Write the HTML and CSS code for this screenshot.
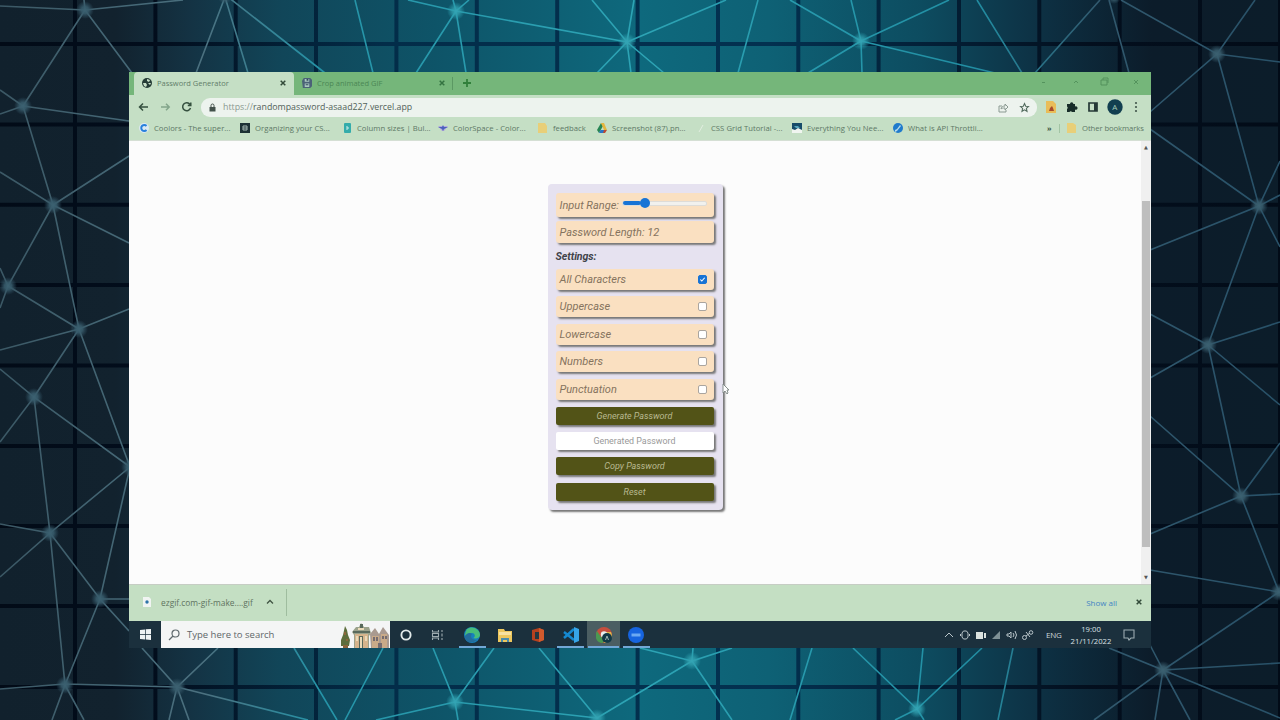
FILE: index.html
```
<!DOCTYPE html>
<html lang="en">
<head>
<meta charset="utf-8">
<title>Password Generator</title>
<link rel="stylesheet" href="styles.css">
</head>
<body>
<svg class="backdrop" viewBox="0 0 1280 720" aria-hidden="true">
  <defs>
    <linearGradient id="sea"><stop offset="0" stop-color="#11212d"/><stop offset=".09" stop-color="#12222e"/><stop offset=".15" stop-color="#143344"/><stop offset=".22" stop-color="#114659"/><stop offset=".34" stop-color="#0e5468"/><stop offset=".5" stop-color="#0e697d"/><stop offset=".6" stop-color="#0e6175"/><stop offset=".72" stop-color="#0d4c60"/><stop offset=".81" stop-color="#0d3144"/><stop offset=".9" stop-color="#0c1c2a"/><stop offset="1" stop-color="#0c1d2a"/></linearGradient>
    <linearGradient id="ray" gradientUnits="userSpaceOnUse" x1="0" y1="0" x2="1280" y2="0"><stop offset="0" stop-color="#3b5865"/><stop offset=".16" stop-color="#4b7180"/><stop offset=".25" stop-color="#2593a7"/><stop offset=".5" stop-color="#2da4b5"/><stop offset=".76" stop-color="#218ea3"/><stop offset=".86" stop-color="#31586d"/><stop offset="1" stop-color="#285168"/></linearGradient>
    <linearGradient id="bar" gradientUnits="userSpaceOnUse" x1="0" y1="0" x2="1280" y2="0"><stop offset="0" stop-color="#020b17"/><stop offset=".12" stop-color="#020d1c"/><stop offset=".3" stop-color="#032d49"/><stop offset=".6" stop-color="#033150"/><stop offset=".85" stop-color="#030f1e"/><stop offset="1" stop-color="#020b17"/></linearGradient>
    <radialGradient id="glow"><stop offset="0" stop-color="#35a5b5" stop-opacity=".95"/><stop offset=".4" stop-color="#309fae" stop-opacity=".8"/><stop offset="1" stop-color="#299eae" stop-opacity="0"/></radialGradient>
    <radialGradient id="dim"><stop offset="0" stop-color="#3c6171"/><stop offset=".4" stop-color="#375b6b" stop-opacity=".9"/><stop offset="1" stop-color="#315263" stop-opacity="0"/></radialGradient>
  </defs>
  <path fill="url(#sea)" d="M0 0h1280v720H0z"/>
  <g fill="url(#bar)"><path d="M0 42h1280v4H0zM0 122.400h1280v4H0zM0 202.800h1280v4H0zM0 283h1280v4H0zM0 363.500h1280v4H0zM0 444h1280v4H0zM0 524h1280v4H0zM0 604h1280v4H0zM0 685h1280v4H0z"/></g>
  <path stroke="url(#bar)" stroke-width="4" d="M75 0V720.1M155.400 0V720.1M235.700 0V720.1M316 0V720.1M396.400 0V720.1M476.800 0V720.1M557.200 0V720.1M637.600 0V720.1M718 0V720.1M798.300 0V720.1M878.600 0V720.1M959 0V720.1M1039.300 0V720.1M1119.700 0V720.1M1200 0V720.1M1280 0V720.1"/>
  <path fill="none" stroke="url(#ray)" stroke-width="1.600" d="M0 6 85 10 183 0M84 0 85 10 23 106M85 10 132 73M225-3 196 73M225-3 248 73M228-3 325 73M355 0 373 73M408 0 456 11M453 0 456 11 469 0M456 11 416 73M456 11 466 73M456 11 627 42M592 0 627 42 634 0M627 42 726 0M597 73 627 42 631 73M627 42 664 73M758 0 738 73M790 0 861 41 851 0M861 41 949 0M808 73 861 41 862 73M861 41 995 73M977 0 1022 73M1100 0 1035 73M1109 0 1129 73M1121 0 1217 54 1255 0M1150 17 1217 54 1280 62M1197 73 1217 54 1222 73M1150 82 1217 54M1150 112 1150 82M1150 82 1217 40" visibility="hidden"/>
  <path fill="none" stroke="url(#ray)" stroke-width="1.600" d="M0 6 85 10 183 0M84 0 85 10 23 106M85 10 132 73M225-3 196 73M225-3 248 73M228-3 325 73M355 0 373 73M408 0 456 11M453 0 456 11 469 0M456 11 416 73M456 11 466 73M456 11 627 42M592 0 627 42 634 0M627 42 726 0M597 73 627 42 631 73M627 42 664 73M758 0 738 73M790 0 861 41 851 0M861 41 949 0M808 73 861 41 862 73M861 41 995 73M977 0 1022 73M1100 0 1035 73M1109 0 1129 73M1121 0 1217 54 1255 0M1217 54 1280 62M1150 112 1217 54 1259 206 1150 129M1280 161 1259 206 1280 195M1259 206 1280 247M1150 250 1259 206 1208 345 1150 314M1150 378 1208 345 1280 322M1208 345 1280 405M1208 345 1241 496 1150 416M1150 534 1241 496 1280 443M1280 494 1241 496 1279 592 1150 570M1279 592 1163 670 1109 648M1150 645 1163 670M1163 670 1280 663M1163 670 1280 718M1094 720 1163 670 1155 720M1163 670 1190 720M0 90 23 106 0 114M23 106 129 121M23 106 53 205 0 172M53 205 129 156M53 205 129 243M53 205 8 286 0 268M0 308 8 286 79 329 53 205M0 350 79 329 129 309M79 329 34 397 0 369M79 329 130 467 34 397 0 442M34 397 50 533 130 467M0 524 50 533 0 577M50 533 100 599 130 467M129 599 100 599 129 631M100 599 65 685 50 533M65 684 0 689M52 720 65 685 84 720M65 684 177 687M142 648 177 687 218 648M177 687 308 720M169 720 177 687 189 720M294 648 337 720M383 648 345 720M433 648 455 702 494 648M376 720 455 702 458 720M455 702 597 718 539 648M597 718 692 661 640 648M693 648 692 661 732 648M692 661 732 720M812 648 790 720M853 648 917 709 923 648M895 720 917 709 982 648M917 709 924 720M1013 648 998 720"/>
  <g fill="url(#glow)"><circle cx="456" cy="11" r="9"/><circle cx="627" cy="42" r="9"/><circle cx="861" cy="41" r="9"/><circle cx="455" cy="702" r="9"/><circle cx="597" cy="718" r="9"/><circle cx="692" cy="661" r="9"/><circle cx="917" cy="709" r="9"/></g>
  <g fill="url(#dim)"><circle cx="85" cy="10" r="9"/><circle cx="23" cy="106" r="9"/><circle cx="53" cy="205" r="9"/><circle cx="8" cy="286" r="9"/><circle cx="79" cy="329" r="9"/><circle cx="34" cy="397" r="9"/><circle cx="130" cy="467" r="9"/><circle cx="50" cy="533" r="9"/><circle cx="100" cy="599" r="9"/><circle cx="65" cy="685" r="9"/><circle cx="177" cy="687" r="9"/><circle cx="1217" cy="54" r="9"/><circle cx="1259" cy="206" r="9"/><circle cx="1208" cy="345" r="9"/><circle cx="1241" cy="496" r="9"/><circle cx="1279" cy="592" r="9"/><circle cx="1163" cy="670" r="9"/><circle cx="225" cy="-3" r="7"/><circle cx="1114" cy="-3" r="7"/></g>
</svg>

<main class="screen">
  <header class="tabs">
    <div class="tab tab-active">
      <svg class="ico" viewBox="0 0 10 10"><circle cx="5" cy="5" r="5" fill="#253c36"/><path d="M5 1l3 1-1 2-2-1zM1 5l3 0 1 2-1 2-2-1zM6 5l3 0-1 2z" fill="#c8dfc8"/></svg>
      <span class="tab-title">Password Generator</span>
      <svg class="cross" viewBox="0 0 6 6"><path d="M.7.7l4.600 4.600M5.300.7L.7 5.300"/></svg>
    </div>
    <div class="tab tab-idle">
      <svg class="ico" viewBox="0 0 11 11"><path fill="#4b6278" d="M0 3l2-3h7l2 2v7l-2 2H1z"/><path fill="#aac8c0" d="M3 1h5v3H3zM3 6h5v4H3z"/><path fill="#33495c" d="M5 1h2v2H5zM4 7h3v1H4z"/></svg>
      <span class="tab-title crop">Crop animated GIF</span>
      <svg class="cross green" viewBox="0 0 6 6"><path d="M.7.7l4.600 4.600M5.300.7L.7 5.300"/></svg>
    </div>
    <i class="tab-rule"></i>
    <svg class="plus" viewBox="0 0 8 8"><path d="M4 0v8M0 4h8"/></svg>
    <svg class="winctl" viewBox="0 0 100 12"><path d="M2 6.500h3M34 7l2-2 2 2M61 4h6v5h-6zM63 4V2h5v5M94 4l4 4M98 4l-4 4"/></svg>
  </header>

  <div class="toolbar">
    <svg class="nav" viewBox="0 0 54 12"><path stroke="#35503f" d="M10 6H1.500M5 2.500L1.500 6 5 9.500M52 3.500A4 4 0 1 0 52.500 7M52.800 1.500v3h-3"/><path stroke="#83a58b" d="M23 6h8M28 2.800L31.200 6 28 9.200"/></svg>
    <div class="address">
      <svg class="lock" viewBox="0 0 7 9"><path fill="#43514b" d="M.5 4h6v4.500h-6z"/><path fill="none" stroke="#43514b" d="M2 4V2.500a1.500 1.500 0 0 1 3 0V4"/></svg>
      <span class="url"><span class="scheme">https://</span>randompassword-asaad227.vercel.app</span>
      <svg class="share" viewBox="0 0 32 11"><path fill="none" stroke="#8b9a92" d="M4 4H1v6h7V8M3 7c0-2 2-3 4-3V2l3 3-3 3V6C5 6 4 6 3 7"/><path fill="none" stroke="#536b5e" stroke-width="1.100" d="M26.500 1.500l1.200 2.700 2.800.3-2.100 1.900.6 2.900-2.500-1.500L24 9.300l.6-2.900-2.100-1.900 2.800-.3z"/></svg>
    </div>
    <svg class="ext" viewBox="0 0 96 16"><path fill="#e9bd58" d="M1 2h7l3 3v9H1z"/><path fill="#a64a2b" d="M4 12l1-3 2-2 1 2 1 3z"/><path fill="#172d29" d="M22 5h3a1.700 1.700 0 0 1 3.400 0H30v2.500a1.600 1.600 0 0 1 2.500 1.500A1.600 1.600 0 0 1 30 10.500V13h-3a1.500 1.500 0 0 0-2.500 0H22v-3a1.500 1.500 0 0 0 0-2.500z"/><path fill="none" stroke="#253936" stroke-width="1.700" d="M44 4h8v8h-8z"/><path fill="#253936" d="M49 4h3v8h-3z"/><circle cx="70" cy="8" r="7.700" fill="#123f50"/><text x="67.300" y="11" fill="#a8cbb8" font-size="8">A</text><g fill="#42564b"><circle cx="91" cy="4" r="1.100"/><circle cx="91" cy="8" r="1.100"/><circle cx="91" cy="12" r="1.100"/></g></svg>
  </div>

  <nav class="bookmarks">
    <a class="bm w101"><svg class="ico" viewBox="0 0 10 10"><circle cx="5" cy="5" r="5" fill="#dce9f2"/><path fill="none" stroke="#2880dc" stroke-width="2" d="M7.500 3a3 3 0 1 0 0 4"/></svg><span>Coolors - The super...</span></a>
    <a class="bm w102"><svg class="ico" viewBox="0 0 10 10"><path fill="#1c3134" d="M0 0h10v10H0z"/><path stroke="#a4b8b2" fill="none" d="M3 3h4v4H3zM3 5h4"/></svg><span>Organizing your CS...</span></a>
    <a class="bm w96"><svg class="ico" viewBox="0 0 10 10"><rect x="2" width="7" height="10" rx="1" fill="#34acab"/><path stroke="#d2eee8" fill="none" d="M5 3v4M5 5h2"/></svg><span>Column sizes | Bul...</span></a>
    <a class="bm w100"><svg class="ico" viewBox="0 0 10 10"><path fill="#b3a9dd" d="M0 3h10L6 8H4z"/><path fill="#4b61bd" d="M0 4h4l1-2 1 2 4 0-4 2-1 2-1-2z"/></svg><span>ColorSpace - Color...</span></a>
    <a class="bm w59"><svg class="ico" viewBox="0 0 10 10"><path fill="#e8cf79" d="M0 0h7l2 3v7H0z"/></svg><span>feedback</span></a>
    <a class="bm w99"><svg class="ico" viewBox="0 0 10 10"><path fill="#268553" d="M4 0L0 7l2 3 4-7z"/><path fill="#e4b63d" d="M4 0h3l3 7H7z"/><path fill="#2874c5" d="M3.500 7H7v3H2z"/><path fill="#bd4932" d="M7 7h3l-2 3H6z"/></svg><span>Screenshot (87).pn...</span></a>
    <a class="bm w96"><svg class="ico" viewBox="0 0 10 10"><path stroke="#e2eee0" d="M3 9l4-7"/></svg><span>CSS Grid Tutorial -...</span></a>
    <a class="bm w101"><svg class="ico" viewBox="0 0 10 10"><path fill="#f0f5f0" d="M0 0h10v10H0z"/><path fill="#164b69" d="M0 0h10v7L6 5 3 7 0 6z"/><path fill="#55a5bd" d="M2 3h4l2 2H4z"/></svg><span>Everything You Nee...</span></a>
    <a class="bm w101"><svg class="ico" viewBox="0 0 10 10"><circle cx="5" cy="5" r="5" fill="#1f7bcc"/><path fill="#b5dbeb" d="M2 7l2-1 3-4 1 1-4 5-2 1z"/></svg><span>What is API Throttli...</span></a>
    <span class="more">»</span><i class="bm-rule"></i>
    <a class="bm other"><svg class="ico" viewBox="0 0 10 10"><path fill="#e8cf79" d="M0 0h6l3 2v8H0z"/></svg><span>Other bookmarks</span></a>
  </nav>

  <section class="viewport">
    <form class="card">
      <label class="field first"><span>Input Range:</span><i class="slider"><b class="fill"></b><b class="knob"></b></i></label>
      <div class="field length">Password Length: 12</div>
      <h2 class="settings">Settings:</h2>
      <label class="field opt">All Characters <i class="box checked"><svg viewBox="0 0 8 8"><path d="M1.500 4l1.700 1.700L6.500 2"/></svg></i></label>
      <label class="field opt">Uppercase <i class="box"></i></label>
      <label class="field opt">Lowercase <i class="box"></i></label>
      <label class="field opt">Numbers <i class="box"></i></label>
      <label class="field opt">Punctuation <i class="box"></i></label>
      <div class="btn gen">Generate Password</div>
      <div class="btn output">Generated Password</div>
      <div class="btn">Copy Password</div>
      <div class="btn">Reset</div>
    </form>
    <svg class="cursor" viewBox="0 0 8 12"><path fill="#fff" stroke="#7c8581" stroke-width=".9" d="M1 1v9l2-2 2 3 1-1-1-3h2z"/></svg>
    <div class="scroll"><i class="arrow">▲</i><i class="thumb"></i><i class="arrow down">▼</i></div>
  </section>

  <div class="downloads">
    <svg class="dl-ico" viewBox="0 0 8 10"><path fill="#f0f4f2" d="M0 0h6l2 2v8H0z"/><circle cx="4" cy="5" r="1.700" fill="#2d73a8"/></svg>
    <span class="dl-name">ezgif.com-gif-make....gif</span>
    <svg class="chev" viewBox="0 0 8 6"><path d="M1 4.500l3-3 3 3"/></svg>
    <i class="dl-rule"></i>
    <span class="show">Show all</span>
    <svg class="cross" viewBox="0 0 6 6"><path d="M.7.7l4.600 4.600M5.300.7L.7 5.300"/></svg>
  </div>

  <footer class="taskbar">
    <div class="start"><svg viewBox="0 0 11 11"><path fill="#eef3f4" d="M0 1l5-.6V5H0zM5.700.3L11 0v5H5.700zM0 5.700h5v4.700L0 10zM5.700 5.700H11V11l-5.300-.6z"/></svg></div>
    <div class="search">
      <svg class="lens" viewBox="0 0 12 12"><circle cx="7.500" cy="4.500" r="3.500"/><path d="M5 7L1 11"/></svg>
      <span>Type here to search</span>
      <svg class="town" viewBox="0 0 50 26"><path fill="#5d6d3c" d="M5 4l2 4 1 5 2 5-1 6H1l0-6 2-5z"/><path fill="#8b653b" d="M3 23h5v3H3zM4 10h2v3H4zM6 17h2v2H6z"/><path fill="#9ba28b" d="M12 10l4-5 3 0 2-4 3 4 5 0 2 6-2 3v12H14V13z"/><path fill="#d5b48c" d="M15 12h13v14H15z"/><path fill="#596a5c" d="M13 9h17v2H13zM19 14h4v12h-4zM20 2h3v4h-3z"/><path fill="#eadab8" d="M20 15h2v11h-2zM16 14h2v5h-2zM25 14h2v5h-2zM18 6h6v2h-6z"/><path fill="#a99a90" d="M30 12l5-6 4 6 4-7 6 8v13H31z"/><path fill="#c9aa88" d="M32 14h7v12h-7zM41 12h6v14h-6z"/><path fill="#756c70" d="M33 15h2v4h-2zM36 15h2v4h-2zM42 14h2v3h-2zM45 14h2v3h-2zM38 21h4v5h-4z"/></svg>
    </div>
    <div class="app"><svg viewBox="0 0 16 16"><circle cx="8" cy="8" r="4.600" fill="none" stroke="#e2e9e9" stroke-width="1.900"/></svg></div>
    <div class="app"><svg viewBox="0 0 16 16"><path fill="none" stroke="#9dabb0" stroke-width="1.100" d="M2.500 3v2h6V3M2.500 13v-2h6v2M2.500 6.500h6v3h-6zM12 3v2M12 6.500v3M12 11v2"/></svg></div>
    <div class="app edge run"><svg viewBox="0 0 16 16"><circle cx="8" cy="8" r="8" fill="#1680bd"/><path fill="#47bd7b" d="M3 2c5-4 13 0 13 6 0 3-4 4-7 3 3-1 2-5-1-5-3 0-5 1-7 3 0-3 1-5 2-7z"/><path fill="#236c9c" d="M1 9c2-3 5-4 7-2-2 2-1 6 5 6-6 5-13 1-12-4z"/></svg></div>
    <div class="app wide"><svg viewBox="0 0 16 16"><path fill="#edc75e" d="M1 2h6l1 2h7v11H1z"/><path fill="#f7e2a1" d="M2 5h12v3H2z"/><path fill="#4b8caa" d="M4 11h8v4h-2v-2H6v2H4z"/></svg></div>
    <div class="app wide"><svg viewBox="0 0 16 16"><path fill="#b5411f" d="M2 3l7-2 5 2v10l-5 2-7-2z"/><path fill="#243740" d="M5 5h4v7H5z"/><path fill="#d15a2d" d="M9 1l5 2v10l-5 2z"/></svg></div>
    <div class="app wide run"><svg viewBox="0 0 16 16"><path fill="none" stroke="#1589d1" stroke-width="2.500" d="M1 5l10 8M1 11l10-9"/><path fill="#36a4e8" d="M11 0l5 2v12l-5 2z"/></svg></div>
    <div class="app wide current run"><svg viewBox="0 0 16 16"><circle cx="8" cy="8" r="8" fill="#c54e3e"/><path fill="#ddb64b" d="M8 5h7c3 7-2 11-7 11l3-7z"/><path fill="#4b9851" d="M1 4l4 6 4 2-2 4C0 16-2 9 1 4z"/><circle cx="8" cy="7.500" r="3.200" fill="#e8eded"/><circle cx="11" cy="11" r="5" fill="#123947"/><path stroke="#9fb4ae" fill="none" d="M9.500 13l1.500-4 1.500 4"/></svg></div>
    <div class="app run"><svg viewBox="0 0 16 16"><circle cx="8" cy="8" r="8" fill="#1664df"/><path fill="#6ba9f2" d="M3.500 6.500h9v3h-9z"/></svg></div>
    <svg class="tray" viewBox="0 0 96 14"><g fill="none" stroke="#b9c5ca"><path d="M1 9l4-4 4 4M19.500 3h3l1.500 2v4l-1.500 2h-3L18 9V5zM16.500 6v2M25.500 6v2M63 6h2l2-2v6l-2-2h-2zM69 5q2 2 0 4M71 3q3 4 0 8M82 8l4-3"/><circle cx="80.500" cy="9.500" r="2"/><circle cx="87" cy="4.500" r="1.800"/><path d="M82 4l4 5"/></g><path fill="#dbe2df" d="M32 4h7v7h-7zM40 5h2v5h-2z"/><path fill="#7e9095" d="M48 11h8V3z"/></svg>
    <span class="eng">ENG</span>
    <span class="clock"><span>19:00</span><span>21/11/2022</span></span>
    <svg class="note" viewBox="0 0 12 12"><path d="M1 1h10v8H8l-2 2-1-2H1z"/></svg>
  </footer>
</main>
</body>
</html>
```
FILE: styles.css
```
* { box-sizing: border-box; }
body { margin: 0; width: 1280px; height: 720px; overflow: hidden; background: #11212d; padding: 72px 0 0 129px; font-family: "Open Sans", "Noto Sans", sans-serif; }
i { font-style: normal; }
svg { flex: none; display: block; }
.backdrop { position: absolute; left: 0; top: 0; width: 1280px; height: 720px; z-index: -1; }
.screen { width: 1022px; height: 576px; display: flex; flex-direction: column; background: #fcfcfc; color: #5d7865; font-size: 7.500px; white-space: nowrap; }

.tabs { height: 23px; background: #75b67a; padding-left: 5px; display: flex; align-items: center; flex: none; }
.tab { display: flex; align-items: center; height: 23px; padding-bottom: 1px; }
.tab-active { width: 160px; background: #c5dfc5; border-radius: 4px 4px 0 0; padding: 0 8px 1px; }
.tab-idle { width: 152px; padding: 0 1px 1px 8px; }
.tab .ico { width: 10px; height: 10px; }
.tab-title { margin-left: 5px; flex: 1; color: #627e69; }
.tab-title.crop { color: #4b8755; }
.cross { width: 6px; height: 6px; stroke: #324a39; stroke-width: 1.500; }
.cross.green { stroke: #347341; }
.tab-rule { width: 1px; height: 13px; background: #5b9863; margin: 0 10px 0 6px; }
.plus { width: 8px; height: 8px; stroke: #31803b; stroke-width: 1.800; margin-bottom: 1px; }
.winctl { width: 100px; height: 12px; margin-left: auto; margin-right: 11px; margin-bottom: 3px; fill: none; stroke: #508f5a; stroke-width: .9; }

.toolbar { height: 24px; background: #c5dfc5; display: flex; align-items: center; padding-left: 9px; flex: none; }
.nav { width: 54px; height: 12px; fill: none; stroke-width: 1.500; }
.address { flex: none; width: 836px; height: 19px; margin-left: 9px; background: #edf3ee; border-radius: 9px; display: flex; align-items: center; padding: 0 7px 0 8px; }
.lock { width: 7px; height: 9px; }
.url { margin-left: 7px; font-size: 8.800px; color: #526259; flex: 1; }
.scheme { color: #8b9991; }
.share { width: 32px; height: 11px; }
.ext { width: 96px; height: 16px; margin-left: 8px; }

.bookmarks { height: 22px; background: #c5dfc5; padding: 0 0 3px 10px; display: flex; align-items: center; flex: none; border-bottom: 1px solid #d5dfd4; }
.bm { display: flex; align-items: center; gap: 5px; flex: none; font-size: 7.700px; letter-spacing: .03px; }
.bm .ico { width: 10px; height: 10px; }
.w101 { width: 101px; }
.w102 { width: 102px; }
.w96 { width: 96px; }
.w100 { width: 100px; }
.w59 { width: 59px; }
.w99 { width: 99px; }
.more { width: 12px; margin-left: 53px; color: #3b5542; font-weight: 700; }
.bm-rule { width: 1px; height: 9px; background: #a2c4a4; margin-right: 7px; }
.other { letter-spacing: -.08px; }

.viewport { height: 443px; background: #fcfcfc; display: flex; justify-content: center; align-items: flex-start; padding: 43px 10px 0 0; position: relative; flex: none; }
.card { width: 175px; height: 326px; background: #e6e2f0; border-radius: 4px; padding: 9px 8px; box-shadow: 2px 2px 2px #777; display: flex; flex-direction: column; font-family: Roboto, sans-serif; font-style: italic; font-size: 11px; color: #85735e; flex: none; }
.field { height: 21px; margin-bottom: 6.400px; border-radius: 3px; background: #fae0c1; box-shadow: 2px 2px 2px #777; display: flex; align-items: center; padding: 0 7px 0 4px; flex: none; width: 158px; }
.first { height: 24px; margin-bottom: 4px; }
.length { height: 22px; margin-bottom: 6px; }
.settings { margin: 0 0 4px; font-size: 10.600px; line-height: 16px; height: 16px; color: #414349; letter-spacing: -.05px; flex: none; }
.opt { justify-content: space-between; }
.slider { width: 85px; height: 5px; border-radius: 2px; background: #f1f1ee; margin: 0 0 4px 3px; display: flex; align-items: center; border: 1px solid #dddcd8; }
.fill { width: 18px; height: 4px; border-radius: 2px; background: #1874d5; }
.knob { width: 10px; height: 10px; border-radius: 5px; background: #1874d5; margin-left: -1px; flex: none; }
.box { width: 9px; height: 9px; border: 1px solid #aaa59f; border-radius: 2px; background: #fff; }
.checked { background: #1874d5; border-color: #1874d5; }
.checked svg { width: 7px; height: 7px; fill: none; stroke: #fff; stroke-width: 1.200; }
.btn { width: 158px; height: 18px; margin-bottom: 7.500px; border-radius: 2px; background: #525317; box-shadow: 2px 2px 2px #777; color: #b8b990; font-size: 9px; display: flex; align-items: center; justify-content: center; flex: none; }
.btn.gen { margin-top: .8px; margin-bottom: 7.200px; }
.btn.output { background: #fff; color: #999; font-style: normal; font-size: 8.900px; }
.cursor { position: absolute; left: 593px; top: 242px; width: 8px; height: 12px; }
.scroll { position: absolute; right: 0; top: 0; width: 10px; height: 443px; background: #f0f0f0; display: flex; flex-direction: column; align-items: center; }
.arrow { height: 60px; font-family: "DejaVu Sans", sans-serif; font-size: 5px; line-height: 12px; color: #555; }
.thumb { width: 8px; height: 346px; background: #bebebe; }
.down { margin-top: auto; height: 13px; }

.downloads { height: 37px; background: #c4dfc3; border-top: 1px solid #c6cdc4; display: flex; align-items: center; padding: 0 9px 2px 14px; flex: none; }
.dl-ico { width: 8px; height: 10px; }
.dl-name { width: 105px; margin-left: 10px; font-size: 8.400px; color: #60735f; }
.chev { width: 8px; height: 6px; fill: none; stroke: #405443; stroke-width: 1.300; }
.dl-rule { width: 1px; height: 27px; background: #9fbd9f; margin-left: 12px; }
.show { margin-left: auto; margin-right: 19px; color: #4384c4; font-size: 8px; }

.taskbar { height: 27px; background: #1b303d; display: flex; align-items: center; flex: none; color: #ccd5d9; }
.start { width: 32px; display: flex; justify-content: center; }
.start svg { width: 11px; height: 11px; }
.search { width: 229px; height: 27px; background: #f4f5f5; display: flex; align-items: center; padding-left: 7px; color: #606669; font-size: 9.500px; }
.lens { width: 12px; height: 12px; margin-right: 7px; fill: none; stroke: #5f696d; stroke-width: 1.200; }
.town { width: 50px; height: 26px; margin-left: auto; }
.app { width: 32px; height: 27px; display: flex; flex: none; align-items: center; justify-content: center; }
.app svg { width: 16px; height: 16px; }
.wide { width: 33px; }
.edge { margin-left: 2px; }
.run { background: linear-gradient(#72a8d7, #72a8d7) center bottom / 27px 2px no-repeat; }
.current { background: linear-gradient(#72a8d7, #72a8d7) center bottom / 31px 2px no-repeat #4b5e62; }
.tray { width: 96px; height: 14px; margin-left: auto; margin-right: 6px; }
.eng { font-size: 8px; width: 22px; letter-spacing: -.2px; }
.clock { width: 46px; display: flex; flex-direction: column; align-items: center; font-size: 7.700px; line-height: 12px; color: #dce2e5; }
.note { width: 12px; height: 12px; margin: 0 16px 0 9px; fill: none; stroke: #9cabb1; stroke-width: 1.100; }
```
